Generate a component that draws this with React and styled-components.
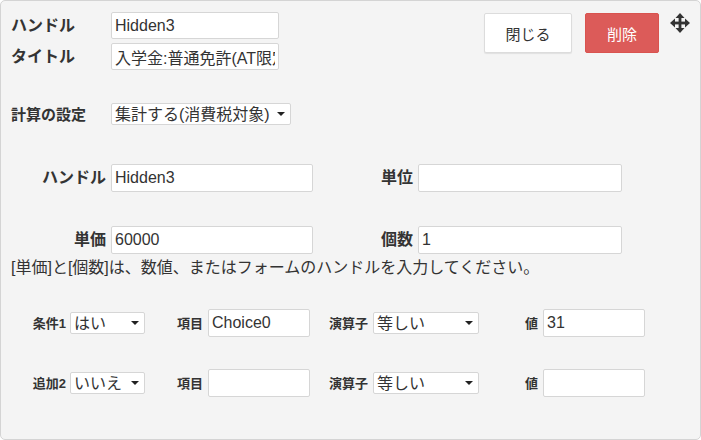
import React from 'react';
import styled, { createGlobalStyle } from 'styled-components';

const GlobalStyle = createGlobalStyle`
  html, body {
    margin: 0;
    padding: 0;
    background: #ffffff;
  }
  * {
    box-sizing: border-box;
  }
  body {
    font-family: "Liberation Sans", "Noto Sans CJK JP", sans-serif;
    color: #333333;
  }
`;

const Panel = styled.div`
  width: 701px;
  height: 440px;
  padding: 11px 10px 0 10px;
  background: #f4f4f4;
  border: 1px solid #d4d4d4;
  border-radius: 5px;
  overflow: hidden;
`;

const HeaderRow = styled.div`
  display: flex;
  justify-content: space-between;
  align-items: flex-start;
`;

const HeaderGrid = styled.div`
  display: grid;
  grid-template-columns: 100px 168px;
  row-gap: 4px;
  align-items: center;
`;

const Label = styled.span`
  font-size: ${(p) => p.size || 16}px;
  font-weight: 700;
  line-height: 1;
  white-space: nowrap;
  text-align: ${(p) => (p.right ? 'right' : 'left')};
  padding-right: ${(p) => p.pad || 0}px;
`;

const TextInput = styled.input`
  width: ${(p) => p.w}px;
  height: ${(p) => p.h || 28}px;
  padding: 0 3px;
  border: 1px solid #d6d6d6;
  border-radius: 2px;
  background: #ffffff;
  font-family: "Liberation Sans", "Noto Sans CJK JP", sans-serif;
  font-size: 16px;
  color: #333333;
  outline: none;
`;

const Actions = styled.div`
  display: flex;
  align-items: flex-start;
  padding-top: 1px;
`;

const Button = styled.button`
  height: 40px;
  width: ${(p) => p.w}px;
  border-radius: 2px;
  font-family: "Liberation Sans", "Noto Sans CJK JP", sans-serif;
  font-size: 15px;
  cursor: pointer;
  border: 1px solid ${(p) => (p.danger ? '#d9534f' : '#dcdcdc')};
  background: ${(p) => (p.danger ? '#dc5b59' : '#ffffff')};
  color: ${(p) => (p.danger ? '#ffffff' : '#333333')};
  box-shadow: ${(p) => (p.danger ? 'none' : '0 1px 1px rgba(0,0,0,0.08)')};
  margin-right: ${(p) => p.gap || 0}px;
`;

const MoveHandle = styled.div`
  width: 20px;
  height: 20px;
  display: flex;
`;

const CalcRow = styled.div`
  display: flex;
  align-items: center;
  margin-top: 33px;
`;

const SelectWrap = styled.div`
  position: relative;
  width: ${(p) => p.w}px;
  height: 22px;
  &::after {
    content: '';
    position: absolute;
    right: 6px;
    top: 9px;
    border-left: 4px solid transparent;
    border-right: 4px solid transparent;
    border-top: 4px solid #222222;
    pointer-events: none;
  }
`;

const Select = styled.select`
  appearance: none;
  width: 100%;
  height: 100%;
  padding: 0 16px 0 3px;
  border: 1px solid #d6d6d6;
  border-radius: 2px;
  background: #ffffff;
  font-family: "Liberation Sans", "Noto Sans CJK JP", sans-serif;
  font-size: 16px;
  color: #333333;
  outline: none;
`;

const FieldGrid = styled.div`
  display: grid;
  grid-template-columns: 100px 202px 105px 204px;
  row-gap: 34px;
  align-items: center;
  margin-top: 39px;
`;

const Help = styled.p`
  margin: 4px 0 0 0;
  font-size: 16px;
  line-height: 20px;
  white-space: nowrap;
`;

const CondGrid = styled.div`
  display: grid;
  grid-template-columns: 59px 75px 63px 102px 63px 106px 64px 102px;
  row-gap: 32px;
  align-items: center;
  margin-top: 31px;
`;

const MoveIcon = () => (
  <svg width="20" height="20" viewBox="0 0 20 20">
    <g fill="#333333">
      <rect x="8.6" y="3" width="2.8" height="14" />
      <rect x="3" y="8.6" width="14" height="2.8" />
      <polygon points="10,0 14.5,5 5.5,5" />
      <polygon points="10,20 14.5,15 5.5,15" />
      <polygon points="0,10 5,5.5 5,14.5" />
      <polygon points="20,10 15,5.5 15,14.5" />
    </g>
  </svg>
);

const Dropdown = ({ w, value, options }) => (
  <SelectWrap w={w}>
    <Select defaultValue={value}>
      {options.map((o) => (
        <option key={o}>{o}</option>
      ))}
    </Select>
  </SelectWrap>
);

const conditions = [
  { label: '条件1', logic: 'はい', item: 'Choice0', value: '31' },
  { label: '追加2', logic: 'いいえ', item: '', value: '' },
];

export default function App() {
  return (
    <>
      <GlobalStyle />
      <Panel>
        <HeaderRow>
          <HeaderGrid>
            <Label>ハンドル</Label>
            <TextInput w={168} h={27} defaultValue="Hidden3" />
            <Label>タイトル</Label>
            <TextInput w={168} h={27} defaultValue="入学金:普通免許(AT限定)" />
          </HeaderGrid>
          <Actions>
            <Button w={88} gap={13}>閉じる</Button>
            <Button w={74} gap={11} danger>削除</Button>
            <MoveHandle>
              <MoveIcon />
            </MoveHandle>
          </Actions>
        </HeaderRow>

        <CalcRow>
          <Label style={{ width: 100 }} size={15}>計算の設定</Label>
          <Dropdown w={180} value="集計する(消費税対象)" options={['集計する(消費税対象)', '集計する(非課税)', '集計しない']} />
        </CalcRow>

        <FieldGrid>
          <Label right pad={5}>ハンドル</Label>
          <TextInput w={202} defaultValue="Hidden3" />
          <Label right pad={5}>単位</Label>
          <TextInput w={204} defaultValue="" />
          <Label right pad={5}>単価</Label>
          <TextInput w={202} defaultValue="60000" />
          <Label right pad={5}>個数</Label>
          <TextInput w={204} defaultValue="1" />
        </FieldGrid>

        <Help>[単価]と[個数]は、数値、またはフォームのハンドルを入力してください。</Help>

        <CondGrid>
          {conditions.map((c) => (
            <React.Fragment key={c.label}>
              <Label right pad={4} size={13}>{c.label}</Label>
              <Dropdown w={75} value={c.logic} options={['はい', 'いいえ']} />
              <Label right pad={5} size={13}>項目</Label>
              <TextInput w={102} defaultValue={c.item} />
              <Label right pad={5} size={13}>演算子</Label>
              <Dropdown w={106} value="等しい" options={['等しい', '等しくない', 'より大きい', 'より小さい']} />
              <Label right pad={5} size={13}>値</Label>
              <TextInput w={102} defaultValue={c.value} />
            </React.Fragment>
          ))}
        </CondGrid>
      </Panel>
    </>
  );
}
